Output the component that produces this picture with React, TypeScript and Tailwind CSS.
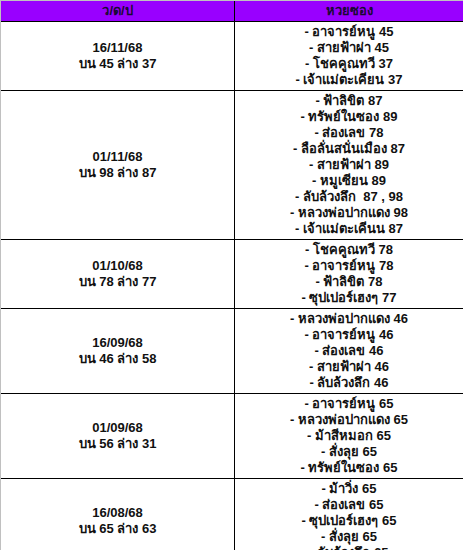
const rows = [
  {
    date: "16/11/68",
    result: "บน 45 ล่าง 37",
    tips: ["อาจารย์หนู 45", "สายฟ้าผ่า 45", "โชคคูณทวี 37", "เจ้าแม่ตะเคียน 37"],
  },
  {
    date: "01/11/68",
    result: "บน 98 ล่าง 87",
    tips: [
      "ฟ้าลิขิต 87",
      "ทรัพย์ในซอง 89",
      "ส่องเลข 78",
      "ลือลั่นสนั่นเมือง 87",
      "สายฟ้าผ่า 89",
      "หมูเซียน 89",
      "ลับล้วงลึก\u00a0 87 , 98",
      "หลวงพ่อปากแดง 98",
      "เจ้าแม่ตะเคีนน 87",
    ],
  },
  {
    date: "01/10/68",
    result: "บน 78 ล่าง 77",
    tips: ["โชคคูณทวี 78", "อาจารย์หนู 78", "ฟ้าลิขิต 78", "ซุปเปอร์เฮงๆ 77"],
  },
  {
    date: "16/09/68",
    result: "บน 46 ล่าง 58",
    tips: ["หลวงพ่อปากแดง 46", "อาจารย์หนู 46", "ส่องเลข 46", "สายฟ้าผ่า 46", "ลับล้วงลึก 46"],
  },
  {
    date: "01/09/68",
    result: "บน 56 ล่าง 31",
    tips: ["อาจารย์หนู 65", "หลวงพ่อปากแดง 65", "ม้าสีหมอก 65", "สั่งลุย 65", "ทรัพย์ในซอง 65"],
  },
  {
    date: "16/08/68",
    result: "บน 65 ล่าง 63",
    tips: ["ม้าวิ่ง 65", "ส่องเลข 65", "ซุปเปอร์เฮงๆ 65", "สั่งลุย 65", "ลับล้วงลึก 65"],
  },
];

export default function App() {
  return (
    <div className="w-full h-[550px] overflow-hidden bg-white">
      <div
        className="w-[464px] border-t border-l border-[#c0c0c0] text-[13px] font-bold leading-4 text-[#111111]"
        style={{ fontFamily: "Tahoma, 'Liberation Sans', 'Noto Sans', sans-serif" }}
      >
        <div className="grid grid-cols-[234px_1fr] bg-[#9900ff] text-[#1a0a33]">
          <div className="h-[21px] flex items-center justify-center border-r border-b border-black">
            ว/ด/ป
          </div>
          <div className="h-[21px] flex items-center justify-center border-r border-b border-black">
            หวยซอง
          </div>
        </div>
        {rows.map((r) => (
          <div key={r.date} className="grid grid-cols-[234px_1fr]">
            <div className="flex flex-col items-center justify-center border-r border-b border-black">
              <div>{r.date}</div>
              <div>{r.result}</div>
            </div>
            <div className="flex flex-col items-center py-[2px] border-r border-b border-black">
              {r.tips.map((t, i) => (
                <div key={i} className="whitespace-pre">
                  - {t}
                </div>
              ))}
            </div>
          </div>
        ))}
      </div>
    </div>
  );
}
